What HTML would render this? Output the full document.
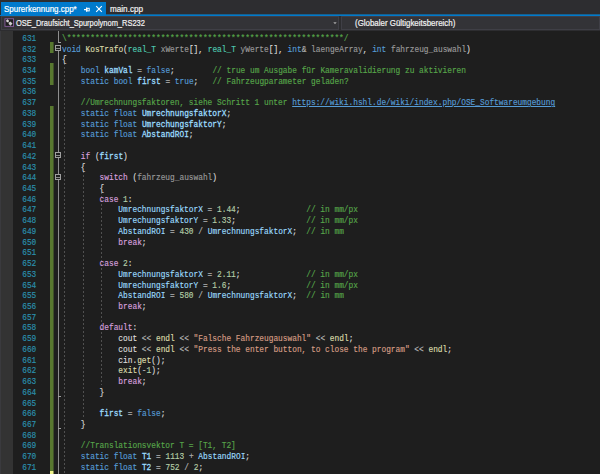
<!DOCTYPE html>
<html><head><meta charset="utf-8">
<style>
*{margin:0;padding:0;box-sizing:border-box}
html,body{width:600px;height:474px;overflow:hidden;background:#2D2D30}
body{position:relative;font-family:"Liberation Sans",sans-serif}
.abs{position:absolute}
#tab{left:1px;top:2px;width:105px;height:14px;background:#007ACC}
#tabline{left:0;top:15px;width:600px;height:1px;background:#007ACC}
#tabline2{left:106px;top:14px;width:494px;height:1px;background:#17608F}
.tt{position:absolute;font-size:8.5px;color:#fff;white-space:nowrap;line-height:9px;transform-origin:0 0;-webkit-text-stroke:0.2px currentColor}
#nav{left:0;top:16px;width:600px;height:15px;background:#2D2D30}
.dd{position:absolute;top:16px;height:13.5px;background:#333337;border:1px solid #3F3F46}
#editor{left:0;top:31px;width:600px;height:443px;background:#1E1E1E}
#margin{left:1px;top:31px;width:12px;height:443px;background:#333333}
#edge{left:0;top:31px;width:1px;height:443px;background:#3A3A3E}
.gb{position:absolute;left:50px;width:4px;background:linear-gradient(to right,#58782F 0,#58782F 3px,#3F5028 3px,#3F5028 4px)}
.yb{position:absolute;left:50px;width:4px;background:linear-gradient(to right,#EFF28A 0,#EFF28A 3px,#8A8C55 3px,#8A8C55 4px)}
.ol{position:absolute;left:58px;width:1px;background:#8E8E8E}
.oh{position:absolute;left:58px;width:3px;height:1px;background:#A0A0A0}
.cb{position:absolute;left:55px;width:6px;height:6px;border:1px solid #A0A0A0;background:#1E1E1E}
.cb div{position:absolute;left:0;top:2px;width:4px;height:1px;background:#8A8A8A}
.ig{position:absolute;width:1px;background:repeating-linear-gradient(to bottom,#505050 0,#505050 2px,transparent 2px,transparent 4px)}
.ln,.nm{position:absolute;font-family:"Liberation Mono",monospace;font-size:8.6px;line-height:10.73px;height:10.73px;white-space:pre;color:#DCDCDC;transform-origin:0 0;-webkit-text-stroke:0.15px currentColor}
.ln{left:62px;transform:scaleX(0.9107)}
.nm{left:0;width:36.3px;text-align:right;color:#2B91AF;transform:scaleX(0.9107);transform-origin:36.3px 0}
i{font-style:normal}
.k{color:#569CD6}.c{color:#D8A0DF}.f{color:#DCDCAA}.t{color:#4EC9B0}.p{color:#9A9A9A}
.v{color:#9CDCFE}.vb{color:#9CDCFE;-webkit-text-stroke:0.28px currentColor}.m{color:#57A64A}.n{color:#B5CEA8}.s{color:#D69D85}.o{color:#B4B4B4}
.u{color:#569CD6;text-decoration:underline}
</style></head><body>
<div id="tab" class="abs"></div>
<div id="tabline" class="abs"></div>
<div id="tabline2" class="abs"></div>
<div class="tt" style="left:4.3px;top:4.5px;transform:scaleX(0.938)">Spurerkennung.cpp*</div>
<svg class="abs" style="left:83px;top:6px" width="8" height="8" viewBox="0 0 8 8"><path d="M1 3.6H3.3M3.6 1.4V5.8" stroke="#fff" stroke-width="1.1" fill="none"/><rect x="4" y="2.3" width="2.2" height="2.6" stroke="#fff" stroke-width="1" fill="none"/></svg>
<svg class="abs" style="left:95px;top:5px" width="8" height="8" viewBox="0 0 8 8"><path d="M1.2 1.2L6.8 6.8M6.8 1.2L1.2 6.8" stroke="#fff" stroke-width="1.1" fill="none"/></svg>
<div class="tt" style="left:109.8px;top:4.5px;color:#F1F1F1;transform:scaleX(0.957)">main.cpp</div>
<div id="nav" class="abs"></div>
<div class="dd" style="left:1px;width:338px"></div>
<div class="dd" style="left:341px;width:259px"></div>
<svg class="abs" style="left:333px;top:22px" width="4" height="3" viewBox="0 0 4 3"><path d="M0.3 0.2H3.7L2 2.3Z" fill="#A8A8A8"/></svg>
<svg class="abs" style="left:3.5px;top:17.8px" width="11" height="9" viewBox="0 0 11 9"><rect x="0.95" y="0.75" width="8.6" height="7.6" fill="#1E1E1E" stroke="#8A5EA0" stroke-width="0.9"/><path d="M3.5 1.5V4.3M2.1 2.9H4.9" stroke="#E0E0E0" stroke-width="1.3"/><path d="M3.6 2.9L6.3 5.5" stroke="#B8B8B8" stroke-width="1"/><path d="M6.3 3.5L8.5 5.6L6.5 7.7L4.4 5.7Z" fill="#D0D0D0"/></svg>
<div class="tt" style="left:15.5px;top:19px;color:#F1F1F1;transform:scaleX(0.88)">OSE_Draufsicht_Spurpolynom_RS232</div>
<div class="tt" style="left:355.2px;top:19px;color:#F1F1F1;transform:scaleX(0.931)">(Globaler Gültigkeitsbereich)</div>
<div id="editor" class="abs"></div>
<div id="margin" class="abs"></div>
<div id="edge" class="abs"></div>
<div class="gb" style="top:42.03px;height:10.73px"></div>
<div class="gb" style="top:63.48px;height:21.45px"></div>
<div class="gb" style="top:106.39px;height:364.74px"></div>
<div class="yb" style="top:471.13px;height:2.87px"></div>
<div class="ol" style="top:31px;height:11.03px"></div>
<div class="ol" style="top:45.03px;height:428.97px"></div>
<div class="oh" style="top:41.53px"></div>
<div class="oh" style="top:395.53px"></div>
<div class="oh" style="top:427.72px"></div>
<div class="cb" style="top:45.03px"><div></div></div>
<div class="cb" style="top:152.30px"><div></div></div>
<div class="cb" style="top:173.76px"><div></div></div>
<div class="ig" style="left:63.85px;top:63.48px;height:418.37px"></div>
<div class="ig" style="left:82.65px;top:170.76px;height:246.73px"></div>
<div class="ig" style="left:101.45px;top:192.21px;height:193.09px"></div>
<div class="nm" style="top:33.80px">631</div>
<div class="nm" style="top:44.53px">632</div>
<div class="nm" style="top:55.25px">633</div>
<div class="nm" style="top:65.98px">634</div>
<div class="nm" style="top:76.71px">635</div>
<div class="nm" style="top:87.44px">636</div>
<div class="nm" style="top:98.16px">637</div>
<div class="nm" style="top:108.89px">638</div>
<div class="nm" style="top:119.62px">639</div>
<div class="nm" style="top:130.35px">640</div>
<div class="nm" style="top:141.07px">641</div>
<div class="nm" style="top:151.80px">642</div>
<div class="nm" style="top:162.53px">643</div>
<div class="nm" style="top:173.26px">644</div>
<div class="nm" style="top:183.99px">645</div>
<div class="nm" style="top:194.71px">646</div>
<div class="nm" style="top:205.44px">647</div>
<div class="nm" style="top:216.17px">648</div>
<div class="nm" style="top:226.89px">649</div>
<div class="nm" style="top:237.62px">650</div>
<div class="nm" style="top:248.35px">651</div>
<div class="nm" style="top:259.08px">652</div>
<div class="nm" style="top:269.81px">653</div>
<div class="nm" style="top:280.53px">654</div>
<div class="nm" style="top:291.26px">655</div>
<div class="nm" style="top:301.99px">656</div>
<div class="nm" style="top:312.71px">657</div>
<div class="nm" style="top:323.44px">658</div>
<div class="nm" style="top:334.17px">659</div>
<div class="nm" style="top:344.90px">660</div>
<div class="nm" style="top:355.62px">661</div>
<div class="nm" style="top:366.35px">662</div>
<div class="nm" style="top:377.08px">663</div>
<div class="nm" style="top:387.81px">664</div>
<div class="nm" style="top:398.53px">665</div>
<div class="nm" style="top:409.26px">666</div>
<div class="nm" style="top:419.99px">667</div>
<div class="nm" style="top:430.72px">668</div>
<div class="nm" style="top:441.44px">669</div>
<div class="nm" style="top:452.17px">670</div>
<div class="nm" style="top:462.90px">671</div>
<div class="ln" style="top:33.80px"><i class="m">\***********************************************************/</i></div>
<div class="ln" style="top:44.53px"><i class="k">void</i> <i class="f">KosTrafo</i>(<i class="t">real_T</i> <i class="p">xWerte</i>[], <i class="t">real_T</i> <i class="p">yWerte</i>[], <i class="k">int</i><i class="o">&amp;</i> <i class="p">laengeArray</i>, <i class="k">int</i> <i class="p">fahrzeug_auswahl</i>)</div>
<div class="ln" style="top:55.25px">{</div>
<div class="ln" style="top:65.98px">    <i class="k">bool</i> <i class="vb">kamVal</i> <i class="o">=</i> <i class="k">false</i>;        <i class="m">// true um Ausgabe für Kameravalidierung zu aktivieren</i></div>
<div class="ln" style="top:76.71px">    <i class="k">static</i> <i class="k">bool</i> <i class="vb">first</i> <i class="o">=</i> <i class="k">true</i>;   <i class="m">// Fahrzeugparameter geladen?</i></div>
<div class="ln" style="top:87.44px"></div>
<div class="ln" style="top:98.16px">    <i class="m">//Umrechnungsfaktoren, siehe Schritt 1 unter </i><i class="u">https://wiki.hshl.de/wiki/index.php/OSE_Softwareumgebung</i></div>
<div class="ln" style="top:108.89px">    <i class="k">static</i> <i class="k">float</i> <i class="vb">UmrechnungsfaktorX</i>;</div>
<div class="ln" style="top:119.62px">    <i class="k">static</i> <i class="k">float</i> <i class="vb">UmrechungsfaktorY</i>;</div>
<div class="ln" style="top:130.35px">    <i class="k">static</i> <i class="k">float</i> <i class="vb">AbstandROI</i>;</div>
<div class="ln" style="top:141.07px"></div>
<div class="ln" style="top:151.80px">    <i class="c">if</i> (<i class="vb">first</i>)</div>
<div class="ln" style="top:162.53px">    {</div>
<div class="ln" style="top:173.26px">        <i class="c">switch</i> (<i class="p">fahrzeug_auswahl</i>)</div>
<div class="ln" style="top:183.99px">        {</div>
<div class="ln" style="top:194.71px">        <i class="c">case</i> <i class="n">1</i>:</div>
<div class="ln" style="top:205.44px">            <i class="v">UmrechnungsfaktorX</i> <i class="o">=</i> <i class="n">1.44</i>;              <i class="m">// in mm/px</i></div>
<div class="ln" style="top:216.17px">            <i class="v">UmrechungsfaktorY</i> <i class="o">=</i> <i class="n">1.33</i>;               <i class="m">// in mm/px</i></div>
<div class="ln" style="top:226.89px">            <i class="v">AbstandROI</i> <i class="o">=</i> <i class="n">430</i> <i class="o">/</i> <i class="v">UmrechnungsfaktorX</i>;  <i class="m">// in mm</i></div>
<div class="ln" style="top:237.62px">            <i class="c">break</i>;</div>
<div class="ln" style="top:248.35px"></div>
<div class="ln" style="top:259.08px">        <i class="c">case</i> <i class="n">2</i>:</div>
<div class="ln" style="top:269.81px">            <i class="v">UmrechnungsfaktorX</i> <i class="o">=</i> <i class="n">2.11</i>;              <i class="m">// in mm/px</i></div>
<div class="ln" style="top:280.53px">            <i class="v">UmrechungsfaktorY</i> <i class="o">=</i> <i class="n">1.6</i>;                <i class="m">// in mm/px</i></div>
<div class="ln" style="top:291.26px">            <i class="v">AbstandROI</i> <i class="o">=</i> <i class="n">580</i> <i class="o">/</i> <i class="v">UmrechnungsfaktorX</i>;  <i class="m">// in mm</i></div>
<div class="ln" style="top:301.99px">            <i class="c">break</i>;</div>
<div class="ln" style="top:312.71px"></div>
<div class="ln" style="top:323.44px">        <i class="c">default</i>:</div>
<div class="ln" style="top:334.17px">            cout <i class="o">&lt;&lt;</i> <i class="f">endl</i> <i class="o">&lt;&lt;</i> <i class="s">&quot;Falsche Fahrzeugauswahl&quot;</i> <i class="o">&lt;&lt;</i> <i class="f">endl</i>;</div>
<div class="ln" style="top:344.90px">            cout <i class="o">&lt;&lt;</i> <i class="f">endl</i> <i class="o">&lt;&lt;</i> <i class="s">&quot;Press the enter button, to close the program&quot;</i> <i class="o">&lt;&lt;</i> <i class="f">endl</i>;</div>
<div class="ln" style="top:355.62px">            cin.<i class="f">get</i>();</div>
<div class="ln" style="top:366.35px">            <i class="f">exit</i>(<i class="o">-</i><i class="n">1</i>);</div>
<div class="ln" style="top:377.08px">            <i class="c">break</i>;</div>
<div class="ln" style="top:387.81px">        }</div>
<div class="ln" style="top:398.53px"></div>
<div class="ln" style="top:409.26px">        <i class="vb">first</i> <i class="o">=</i> <i class="k">false</i>;</div>
<div class="ln" style="top:419.99px">    }</div>
<div class="ln" style="top:430.72px"></div>
<div class="ln" style="top:441.44px">    <i class="m">//Translationsvektor T = [T1, T2]</i></div>
<div class="ln" style="top:452.17px">    <i class="k">static</i> <i class="k">float</i> <i class="vb">T1</i> <i class="o">=</i> <i class="n">1113</i> <i class="o">+</i> <i class="v">AbstandROI</i>;</div>
<div class="ln" style="top:462.90px">    <i class="k">static</i> <i class="k">float</i> <i class="vb">T2</i> <i class="o">=</i> <i class="n">752</i> <i class="o">/</i> <i class="n">2</i>;</div>
</body></html>
